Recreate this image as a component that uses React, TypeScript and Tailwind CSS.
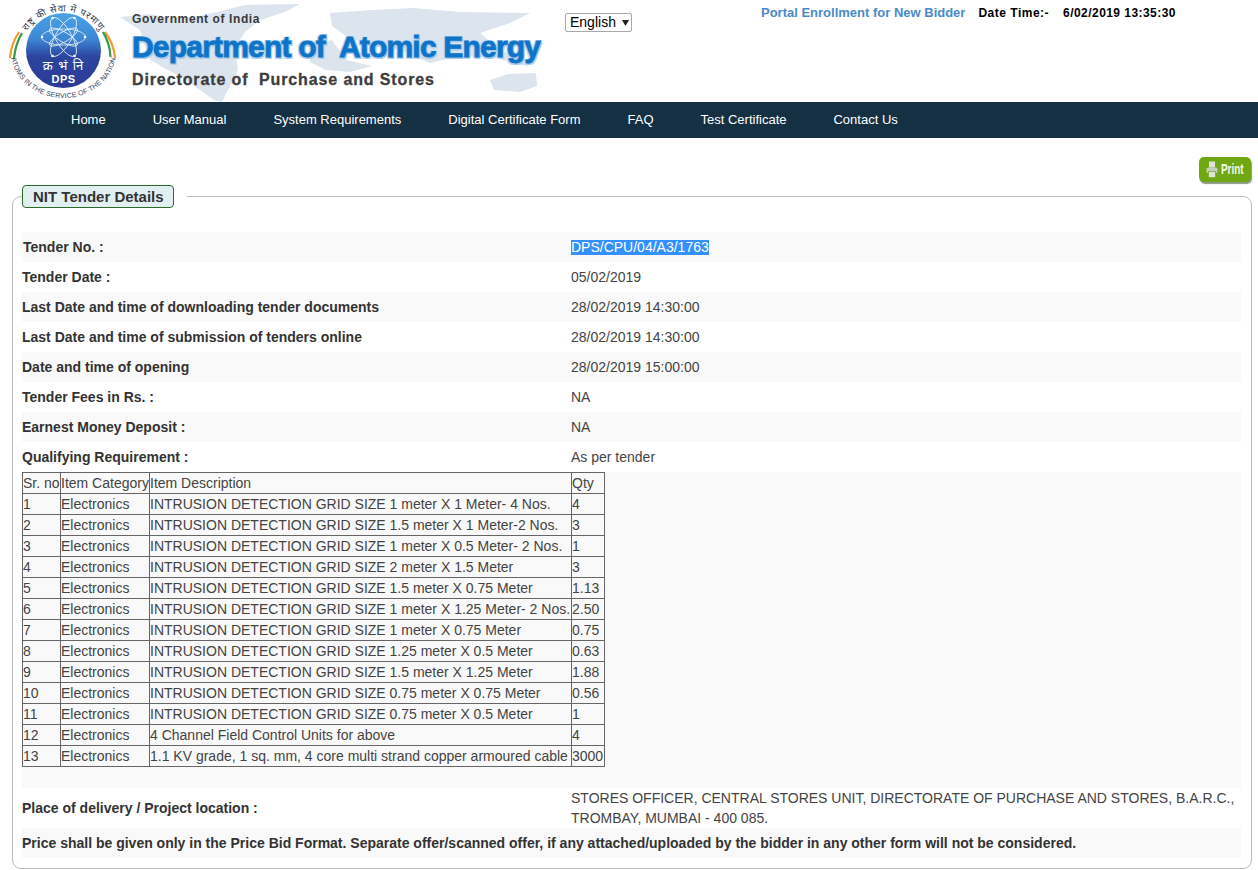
import * as React from 'react';

const navItems = [
  'Home',
  'User Manual',
  'System Requirements',
  'Digital Certificate Form',
  'FAQ',
  'Test Certificate',
  'Contact Us',
];

const items = [
  ['INTRUSION DETECTION GRID SIZE 1 meter X 1 Meter- 4 Nos.', '4'],
  ['INTRUSION DETECTION GRID SIZE 1.5 meter X 1 Meter-2 Nos.', '3'],
  ['INTRUSION DETECTION GRID SIZE 1 meter X 0.5 Meter- 2 Nos.', '1'],
  ['INTRUSION DETECTION GRID SIZE 2 meter X 1.5 Meter', '3'],
  ['INTRUSION DETECTION GRID SIZE 1.5 meter X 0.75 Meter', '1.13'],
  ['INTRUSION DETECTION GRID SIZE 1 meter X 1.25 Meter- 2 Nos.', '2.50'],
  ['INTRUSION DETECTION GRID SIZE 1 meter X 0.75 Meter', '0.75'],
  ['INTRUSION DETECTION GRID SIZE 1.25 meter X 0.5 Meter', '0.63'],
  ['INTRUSION DETECTION GRID SIZE 1.5 meter X 1.25 Meter', '1.88'],
  ['INTRUSION DETECTION GRID SIZE 0.75 meter X 0.75 Meter', '0.56'],
  ['INTRUSION DETECTION GRID SIZE 0.75 meter X 0.5 Meter', '1'],
  ['4 Channel Field Control Units for above', '4'],
  ['1.1 KV grade, 1 sq. mm, 4 core multi strand copper armoured cable', '3000'],
];

const rows = [
  ['Tender Date :', '05/02/2019'],
  ['Last Date and time of downloading tender documents', '28/02/2019 14:30:00'],
  ['Last Date and time of submission of tenders online', '28/02/2019 14:30:00'],
  ['Date and time of opening', '28/02/2019 15:00:00'],
  ['Tender Fees in Rs. :', 'NA'],
  ['Earnest Money Deposit :', 'NA'],
  ['Qualifying Requirement :', 'As per tender'],
];

const Logo = () => (
  <svg width="130" height="102" viewBox="0 0 130 102" className="relative block">
    <defs>
      <linearGradient id="disc" x1="0" y1="0" x2="0" y2="1">
        <stop offset="0" stopColor="#4aa3e6" />
        <stop offset="0.35" stopColor="#3d86d6" />
        <stop offset="0.58" stopColor="#2c459f" />
        <stop offset="1" stopColor="#2b3a96" />
      </linearGradient>
      <path id="topArc" d="M20.5 53 A43 41.5 0 0 1 106.5 53" />
      <path id="bottomArc" d="M10.5 50 A53 48 0 0 0 116.5 50" />
    </defs>
    <path d="M19 32 Q11 44 10 58" fill="none" stroke="#f39a33" strokeWidth="2.2" />
    <path d="M22 33 Q15 45 14 59" fill="none" stroke="#2f9b45" strokeWidth="2.2" />
    <path d="M105 32 Q114 44 115 58" fill="none" stroke="#f39a33" strokeWidth="2.2" />
    <path d="M103 32 Q110 44 110.5 57" fill="none" stroke="#2f9b45" strokeWidth="2.2" />
    <circle cx="63.5" cy="50.5" r="37.5" fill="url(#disc)" />
    <g fill="none" stroke="#ffffff" strokeWidth="0.8" opacity="0.9">
      <ellipse cx="63.5" cy="37" rx="22" ry="8" />
      <ellipse cx="63.5" cy="37" rx="22" ry="8" transform="rotate(60 63.5 37)" />
      <ellipse cx="63.5" cy="37" rx="22" ry="8" transform="rotate(120 63.5 37)" />
      <ellipse cx="63.5" cy="37" rx="16" ry="5" transform="rotate(30 63.5 37)" />
      <ellipse cx="63.5" cy="37" rx="16" ry="5" transform="rotate(150 63.5 37)" />
    </g>
    <g fill="#ffffff">
      <circle cx="42" cy="37" r="1.3" />
      <circle cx="85" cy="37" r="1.3" />
      <circle cx="52.5" cy="18" r="1.3" />
      <circle cx="74.5" cy="18" r="1.3" />
      <circle cx="52.5" cy="56" r="1.3" />
      <circle cx="74.5" cy="56" r="1.3" />
    </g>
    <text x="63.5" y="70" textAnchor="middle" fill="#ffffff" fontSize="13" letterSpacing="1" fontFamily="'Noto Sans', 'DejaVu Sans', sans-serif">
      क्र भं नि
    </text>
    <text x="63.5" y="83" textAnchor="middle" fill="#ffffff" fontSize="11" fontWeight="700" letterSpacing="0.4" fontFamily="'Liberation Sans', sans-serif">
      DPS
    </text>
    <text fill="#333f5c" fontSize="9.5" letterSpacing="0.8" textAnchor="middle" fontFamily="'Noto Sans', 'DejaVu Sans', sans-serif">
      <textPath href="#topArc" startOffset="50%">राष्ट्र की सेवा में परमाणु</textPath>
    </text>
    <text fill="#333f5c" fontSize="7" letterSpacing="0.15" textAnchor="middle" fontFamily="'Liberation Sans', sans-serif">
      <textPath href="#bottomArc" startOffset="50%">ATOMS IN THE SERVICE OF THE NATION</textPath>
    </text>
  </svg>
);

// pale world map behind the department title
const WorldMap = () => (
  <svg width="440" height="102" viewBox="0 0 440 102" className="absolute left-[110px] top-0" fill="#dce4ed">
    <path d="M10 17 L40 14 L60 18 L90 16 L115 10 L135 5 L190 4 L175 12 L150 20 L135 32 L125 48 L128 70 L112 102 L104 100 L76 80 L40 60 L30 30 Z" />
    <path d="M200 44 L222 40 L236 60 L262 66 L240 72 L216 70 L200 62 Z" />
    <path d="M220 13 L262 10 L303 8 L350 12 L420 13 L400 23 L370 33 L385 46 L420 67 L385 58 L350 56 L320 63 L290 50 L262 46 L236 36 L222 26 Z" />
    <path d="M380 80 L398 74 L426 73 L427 86 L410 92 L384 90 Z" />
  </svg>
);

const ItemTable = () => (
  <table className="border-collapse border border-black text-[14px] leading-[20px] text-[#444444]">
    <tbody>
      <tr>
        <td className="w-[38px] whitespace-nowrap border border-[#666666] p-0">Sr. no</td>
        <td className="w-[89px] whitespace-nowrap border border-[#666666] p-0">Item Category</td>
        <td className="w-[422px] border border-[#666666] p-0">Item Description</td>
        <td className="w-[33px] border border-[#666666] p-0">Qty</td>
      </tr>
      {items.map(([description, qty], i) => (
        <tr key={i}>
          <td className="border border-[#666666] p-0">{i + 1}</td>
          <td className="border border-[#666666] p-0">Electronics</td>
          <td className="whitespace-nowrap border border-[#666666] p-0">{description}</td>
          <td className="border border-[#666666] p-0">{qty}</td>
        </tr>
      ))}
    </tbody>
  </table>
);

export default function App() {
  return (
    <div className="min-h-[870px] bg-white font-['Liberation_Sans',Arial,sans-serif] text-[14px] text-[#444444]">
      <header className="relative flex h-[102px]">
        <WorldMap />
        <Logo />
        <div className="relative ml-[2px] w-[434px] pt-3 font-bold">
          <div className="text-[12px] leading-[14px] tracking-[0.6px] text-[#3a3a3a]">Government of India</div>
          <div className="mt-[3px] whitespace-nowrap text-[30px] leading-[36px] tracking-[-0.8px] text-[#0f74c8] [-webkit-text-stroke:0.8px_#0f74c8] [text-shadow:1.5px_1.5px_0_#a9cbe9,-1.5px_-1.5px_0_#bcd9f2,1.5px_-1.5px_0_#bcd9f2,-1.5px_1.5px_0_#bcd9f2]">
            Department of&nbsp; Atomic Energy
          </div>
          <div className="mt-[5px] whitespace-nowrap text-[16px] leading-[20px] tracking-[0.88px] text-[#3d3d3d] [-webkit-text-stroke:0.3px_#3d3d3d]">
            Directorate of&nbsp; Purchase and Stores
          </div>
        </div>
        <div className="relative ml-[-1px] pt-[13px]">
          <div className="flex h-[19px] w-[67px] items-center gap-[6px] rounded-[2px] border border-[#a9a9a9] bg-white pl-[4px] text-[14px] text-black">
            English
            <svg width="7" height="6" viewBox="0 0 7 6"><path d="M0 0H7L3.5 6Z" fill="#222222" /></svg>
          </div>
        </div>
        <div className="relative ml-[129px] flex h-[26px] items-center whitespace-nowrap font-bold">
          <span className="text-[13px] text-[#4a8ac9]">Portal Enrollment for New Bidder</span>
          <span className="ml-[13px] text-[12px] tracking-[0.5px] text-black">Date Time:-</span>
          <span className="ml-[14px] text-[12px] tracking-[0.45px] text-black">6/02/2019 13:35:30</span>
        </div>
      </header>

      <nav className="flex h-[36px] items-center gap-[47px] bg-[#152f43] pl-[71px] text-[13px] text-white">
        {navItems.map((item) => (
          <a key={item}>{item}</a>
        ))}
      </nav>

      <div className="flex justify-end pr-[7px] pt-[19px]">
        <div className="flex h-[25px] w-[52px] items-center overflow-hidden rounded-[5px] bg-[#6fa812] pl-[7px] shadow-[1px_2px_1px_#8a9a80]">
          <svg width="12" height="17" viewBox="0 0 12 17" className="shrink-0" fill="#dfe3dc">
            <rect x="3" y="0.5" width="6" height="6" />
            <rect x="0.5" y="6.5" width="11" height="5.5" rx="1.5" fill="#c6ccc2" />
            <rect x="2.5" y="10.5" width="7" height="6" stroke="#6fa812" strokeWidth="0.7" />
          </svg>
          <span className="ml-[3px] origin-left scale-x-[0.66] whitespace-nowrap text-[15px] font-bold text-[#f4f8ea]">Print</span>
        </div>
      </div>

      <fieldset className="ml-3 mr-[6px] mt-[3px] rounded-[9px] border border-[#bbbbbb] pb-[10px] pl-[9px] pr-[10px]">
        <legend className="w-[165px] p-0">
          <div className="h-[23px] w-[152px] rounded-[4px] border border-[#2c6a2c] bg-[#e2eff0] pl-[10px] text-[15px] font-bold leading-[21px] text-[#333333]">
            NIT Tender Details
          </div>
        </legend>
        <div className="mt-[24px] flex h-[30px] items-center bg-[#f9f9f9]">
          <span className="w-[549px] pl-px font-bold text-[#333333]">Tender No. :</span>
          <span className="bg-[#3390ff] leading-[15px] text-white">DPS/CPU/04/A3/1763</span>
        </div>
        {rows.map(([label, value], i) => (
          <div key={label} className={`flex h-[30px] items-center ${i % 2 === 1 ? 'bg-[#f9f9f9]' : 'bg-white'}`}>
            <span className="w-[549px] font-bold text-[#333333]">{label}</span>
            <span>{value}</span>
          </div>
        ))}
        <div className="h-[316px] bg-[#f9f9f9]">
          <ItemTable />
        </div>
        <div className="flex h-[40px] items-center">
          <span className="w-[549px] font-bold text-[#333333]">Place of delivery / Project location :</span>
          <span className="leading-[20px]">
            STORES OFFICER, CENTRAL STORES UNIT, DIRECTORATE OF PURCHASE AND STORES, B.A.R.C.,
            <br />
            TROMBAY, MUMBAI - 400 085.
          </span>
        </div>
        <div className="flex h-[30px] items-center bg-[#f9f9f9] font-bold text-[#333333]">
          Price shall be given only in the Price Bid Format. Separate offer/scanned offer, if any attached/uploaded by the bidder in any other form will not be considered.
        </div>
      </fieldset>
    </div>
  );
}
